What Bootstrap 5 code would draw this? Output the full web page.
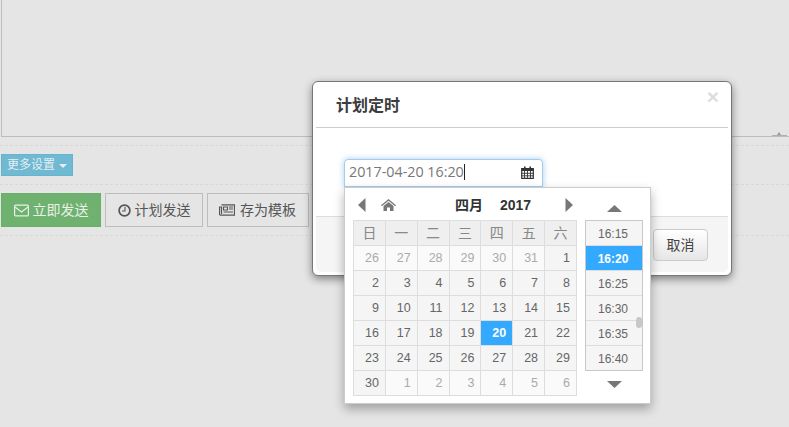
<!DOCTYPE html>
<html lang="zh">
<head>
<meta charset="utf-8">
<title>计划定时</title>
<link rel="stylesheet" href="https://cdn.jsdelivr.net/npm/bootstrap@5.3.0/dist/css/bootstrap.min.css">
<style>
html,body{height:100%;overflow:hidden}
body{background:#e5e5e5;font-family:"Liberation Sans","Noto Sans CJK SC",sans-serif;font-size:14px;color:#555;position:relative}
.editor-box{height:137px;margin-left:1px;border-left:1px solid #bdbdbd;border-bottom:1px solid #bdbdbd;position:relative}
.editor-grip{position:absolute;right:2px;bottom:0;width:15px;height:1px;background:#b0b0b0}
.editor-grip::after{content:"";position:absolute;left:5px;top:-3px;border:solid transparent;border-width:0 2px 3px;border-bottom-color:#999}
.dash-row{border-bottom:1px dashed #d8d8d8}
.more-row{height:48px;padding:17px 0 0 1px;}
.more-row::before{content:"";display:block;position:absolute;left:0;right:0;top:145px;border-top:1px dashed #d8d8d8}
.more-btn{display:inline-flex;align-items:center;gap:4px;width:72px;height:22px;padding:0 5px;background:#6fb9d3;border:1px solid #69b4cd;color:#e6eef0;font-size:12px;border-radius:0;line-height:1}
.more-caret{border:solid transparent;border-width:4px 4px 0;border-top-color:#e6eef0;margin-top:2px}
.action-row{height:51px;padding:8px 0 0 1px;gap:4px}
.act-btn{display:inline-flex;align-items:center;justify-content:center;gap:4px;height:34px;border:1px solid #bdbdbd;background:transparent;color:#555;font-size:14px;border-radius:0;padding:0}
.act-go{width:100px;background:#6fb26f;border-color:#69af69;color:#e8f0e8}
.act-plan{width:98px}
.act-save{width:102px;gap:5px;padding-right:1px}
.plan-dialog{position:absolute;left:312px;top:81px;width:420px;height:195px}
.plan-dialog .modal-content{height:100%;padding:0 3px 3px;background:#fff;border:1px solid #777;border-radius:6px;box-shadow:0 3px 8px rgba(0,0,0,.45);display:flex;flex-direction:column}
.plan-dialog .modal-header{height:46px;flex:none;padding:0 20px;border-bottom:1px solid #ccc;border-radius:0;align-items:center}
.plan-title{font-size:16px;font-weight:700;color:#3c3c3c;margin:0;line-height:1;padding-top:3px}
.plan-close{position:absolute;right:12px;top:5px;color:#ddd;font-size:21px;font-weight:700;line-height:20px;background:none;border:0;padding:0}
.plan-dialog .modal-body{height:88px;flex:none;padding:31px 0 0 28px}
.date-input{width:199px;height:28px;border:1px solid #a9cbe8;border-radius:4px 4px 0 0;box-shadow:0 0 6px rgba(102,175,233,.6);display:flex;align-items:center;padding:0 8px 2px 4px;font-family:"Open Sans",sans-serif;font-size:14.3px;color:#777;background:#fff}
.date-caret{display:inline-block;width:1px;height:16px;background:#222}
.plan-dialog .modal-footer{flex:1;padding:0;background:#f5f5f5;border-top:1px solid #ddd;border-radius:0 0 5px 5px;display:flex;justify-content:flex-end;align-items:flex-start;padding:12px 20px 0 0}
.cancel-btn{width:55px;height:32px;padding:0;border:1px solid #ccc;border-radius:4px;background:linear-gradient(#fff,#e6e6e6);color:#444;font-size:14px;margin:0}
.dtp-popup{position:absolute;left:344px;top:187px;width:307px;height:217px;background:#fff;border:1px solid #ccc;box-shadow:0 5px 10px rgba(0,0,0,.3)}
.dtp-head{position:absolute;left:0;top:0;width:100%;height:32px}
.dtp-title{position:absolute;left:110px;top:7px;font-size:14px;font-weight:700;color:#333;line-height:20px;white-space:nowrap}
.dtp-title span{margin-left:17px}
.dtp-ico{position:absolute;display:block}
.dtp-table{position:absolute;left:8px;top:32px;border-collapse:collapse;table-layout:fixed;width:224px}
.dtp-table th,.dtp-table td{height:25px;border:1px solid #ddd;background:#f5f5f5;font-size:12.5px;line-height:1;color:#666;text-align:right;padding:0 6px 0 0;font-weight:400}
.dtp-table th{background:#efefef;color:#888;text-align:center;padding:0;font-size:14px}
.dtp-table td.off{background:#fafafa;color:#aaa}
.dtp-table td.sel{background:#33a9ff;color:#fff;font-weight:700}
.time-list{position:absolute;left:240px;top:32px;width:58px;height:151px;border:1px solid #c8c8c8;overflow:hidden}
.time-item{height:25px;background:#f5f5f5;border-bottom:1px solid #ddd;font-size:12px;color:#666;display:flex;align-items:center;justify-content:center;padding:1px 2px 0 0}
.time-item.sel{background:#33a9ff;color:#fff;font-weight:700}
.time-thumb{position:absolute;right:0;top:96px;width:6px;height:11px;background:#c8c8c8;border-radius:3px}
</style>
</head>
<body>
<div class="editor-box"><div class="editor-grip"></div></div>
<div class="dash-row more-row">
  <button type="button" class="more-btn">更多设置<span class="more-caret"></span></button>
</div>
<div class="dash-row action-row d-flex">
  <button type="button" class="act-btn act-go">
    <svg width="15" height="13" viewBox="0 0 15 13"><rect x=".6" y="1.100" width="13.800" height="10.800" rx="1" fill="none" stroke="currentColor" stroke-width="1.200"/><path d="M1 3l6.500 5L14 3" fill="none" stroke="currentColor" stroke-width="1.200"/></svg>立即发送</button>
  <button type="button" class="act-btn act-plan">
    <svg width="13" height="13" viewBox="0 0 13 13"><circle cx="6.500" cy="6.500" r="5.400" fill="none" stroke="currentColor" stroke-width="1.700"/><path d="M7 3v4H4" fill="none" stroke="currentColor" stroke-width="1.100"/></svg>计划发送</button>
  <button type="button" class="act-btn act-save">
    <svg width="16" height="12" viewBox="0 0 16 12"><path d="M2.500.8h13v10.400H1.500a1 1 0 0 1-1-1V3h2v7" fill="none" stroke="currentColor" stroke-width="1.200"/><path d="M4.500 3h4v3h-4zM10 3h4M10 5h4M4.500 8h9.500" fill="none" stroke="currentColor" stroke-width="1.100"/></svg>存为模板</button>
</div>

<div class="plan-dialog">
  <div class="modal-content">
    <button type="button" class="plan-close">×</button>
    <div class="modal-header"><h5 class="plan-title">计划定时</h5></div>
    <div class="modal-body">
      <div class="date-input">2017-04-20 16:20<span class="date-caret"></span>
        <svg class="ms-auto" width="13" height="13" viewBox="0 0 13 13"><path d="M.7 2.500h11.600v9.800H.700z" fill="none" stroke="#333" stroke-width="1.200"/><path d="M.7 2h11.600v3H.7zM3 .5h1.600V3H3zM8.400.5H10V3H8.400z" fill="#333"/><path d="M.7 7.300h11.600M.7 9.800h11.600M3.500 5v7M6.500 5v7M9.500 5v7" stroke="#333" stroke-width=".9"/></svg>
      </div>
    </div>
    <div class="modal-footer"><button type="button" class="cancel-btn">取消</button></div>
  </div>
</div>

<div class="dtp-popup">
  <div class="dtp-head">
    <svg class="dtp-ico" style="left:13px;top:10px" width="8" height="14" viewBox="0 0 8 14"><path d="M7.500 0v14L0 7z" fill="#777"/></svg>
    <svg class="dtp-ico" style="left:36px;top:11px" width="15" height="12" viewBox="0 0 15 12"><path d="M7.500 0L15 6.300l-.8.900-6.700-5.500L.8 7.200 0 6.300zM2.500 7l5-4 5 4v5H9V8.500H6V12H2.500z" fill="#777"/></svg>
    <div class="dtp-title">四月<span>2017</span></div>
    <svg class="dtp-ico" style="left:220px;top:10px" width="8" height="14" viewBox="0 0 8 14"><path d="M.5 0v14L8 7z" fill="#777"/></svg>
    <svg class="dtp-ico" style="left:262px;top:17px" width="15" height="7" viewBox="0 0 15 7"><path d="M0 7L7.500 0 15 7z" fill="#777"/></svg>
  </div>
  <table class="dtp-table">
    <thead><tr><th>日</th><th>一</th><th>二</th><th>三</th><th>四</th><th>五</th><th>六</th></tr></thead>
    <tbody>
      <tr><td class="off">26</td><td class="off">27</td><td class="off">28</td><td class="off">29</td><td class="off">30</td><td class="off">31</td><td>1</td></tr>
      <tr><td>2</td><td>3</td><td>4</td><td>5</td><td>6</td><td>7</td><td>8</td></tr>
      <tr><td>9</td><td>10</td><td>11</td><td>12</td><td>13</td><td>14</td><td>15</td></tr>
      <tr><td>16</td><td>17</td><td>18</td><td>19</td><td class="sel">20</td><td>21</td><td>22</td></tr>
      <tr><td>23</td><td>24</td><td>25</td><td>26</td><td>27</td><td>28</td><td>29</td></tr>
      <tr><td>30</td><td class="off">1</td><td class="off">2</td><td class="off">3</td><td class="off">4</td><td class="off">5</td><td class="off">6</td></tr>
    </tbody>
  </table>
  <div class="time-list">
    <div class="time-item">16:15</div>
    <div class="time-item sel">16:20</div>
    <div class="time-item">16:25</div>
    <div class="time-item">16:30</div>
    <div class="time-item">16:35</div>
    <div class="time-item">16:40</div>
    <div class="time-thumb"></div>
  </div>
  <svg class="dtp-ico" style="left:262px;top:193px" width="15" height="7" viewBox="0 0 15 7"><path d="M0 0l7.500 7L15 0z" fill="#777"/></svg>
</div>
<script src="https://cdn.jsdelivr.net/npm/bootstrap@5.3.0/dist/js/bootstrap.bundle.min.js"></script>
</body>
</html>
